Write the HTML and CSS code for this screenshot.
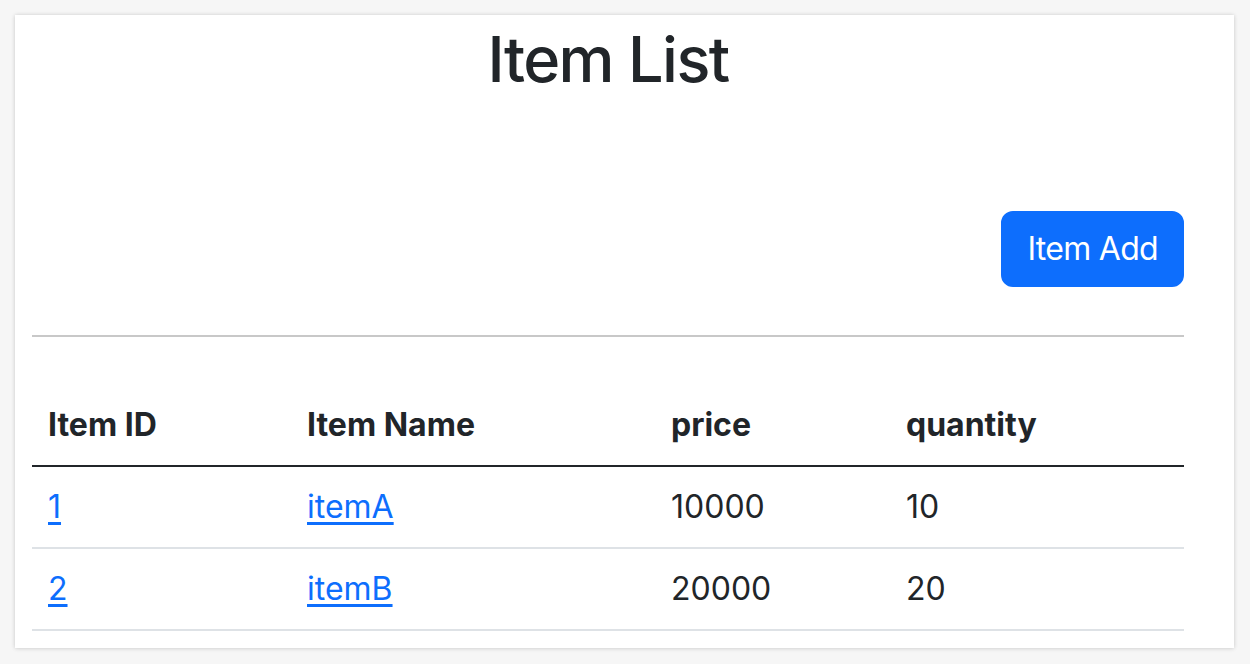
FILE: index.html
```html
<!DOCTYPE html>
<html lang="en">
<head>
<meta charset="utf-8">
<title>Item List</title>
<link rel="stylesheet" href="styles.css">
</head>
<body>
<div class="window">
  <div class="container">
    <h2 class="title">Item List</h2>
    <div class="actions">
      <button class="btn" type="button">Item Add</button>
    </div>
    <hr class="divider">
    <table class="table">
      <thead>
        <tr>
          <th class="c1">Item ID</th>
          <th class="c2">Item Name</th>
          <th class="c3">price</th>
          <th class="c4">quantity</th>
        </tr>
      </thead>
      <tbody>
        <tr>
          <td><a href="#">1</a></td>
          <td><a href="#">itemA</a></td>
          <td>10000</td>
          <td>10</td>
        </tr>
        <tr>
          <td><a href="#">2</a></td>
          <td><a href="#">itemB</a></td>
          <td>20000</td>
          <td>20</td>
        </tr>
      </tbody>
    </table>
  </div>
</div>
</body>
</html>
```

FILE: styles.css
```css
html, body {
  margin: 0;
  padding: 0;
}
body {
  background: #f6f6f6;
  font-family: Inter, "Noto Sans", "Liberation Sans", sans-serif;
  color: #212529;
  font-size: 32px;
  line-height: 1.5;
  width: 1250px;
  height: 664px;
  overflow: hidden;
}
.window {
  margin: 15px 0 0 15px;
  width: 1219px;
  height: 633px;
  background: #fff;
  box-shadow: 0 0 4px rgba(0,0,0,0.14), 0 1px 5px rgba(0,0,0,0.06);
  box-sizing: border-box;
  padding: 7px 0 0 17px;
}
.container {
  width: 1152px;
}
.title {
  margin: 0;
  font-size: 63px;
  font-weight: 500;
  line-height: 1.2;
  letter-spacing: -1.6px;
  text-align: center;
}
.actions {
  display: flex;
  justify-content: flex-end;
  margin-top: 113px;
}
.btn {
  font-family: inherit;
  font-size: 32px;
  line-height: 48px;
  padding: 12px 24px;
  border: 2px solid #0d6efd;
  background: #0d6efd;
  color: #fff;
  border-radius: 12px;
  letter-spacing: -0.7px;
  cursor: pointer;
}
.divider {
  margin: 48px 0 0 0;
  border: 0;
  border-top: 2px solid #c8c8c8;
}
.table {
  margin-top: 48px;
  width: 100%;
  border-collapse: collapse;
}
.table th, .table td {
  text-align: left;
  padding: 16px;
  line-height: 48px;
  border-bottom: 2px solid #dee2e6;
}
.table th {
  font-weight: 700;
}
.table thead th {
  border-bottom: 2px solid #212529;
}
.c1 { width: 227px; }
.c2 { width: 332px; }
.c3 { width: 203px; }
.table a {
  color: #0d6efd;
  text-decoration: underline;
  text-underline-offset: 4px;
}
```
